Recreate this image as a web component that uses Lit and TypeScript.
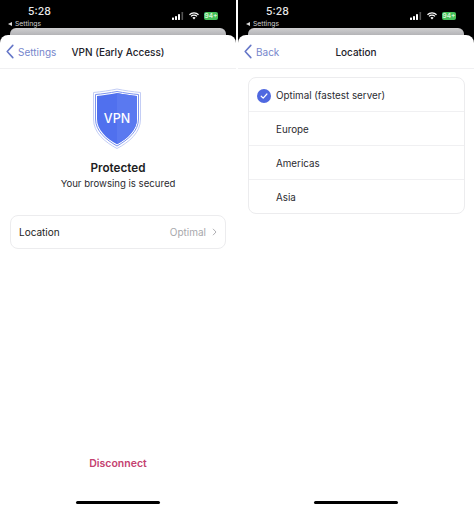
import { LitElement, html, css, svg } from "lit";
import { customElement } from "lit/decorators.js";

const chevron = html`<svg class="back-icon" viewBox="0 0 10 16" width="10" height="15"><path d="M8 1.500 2 8l6 6.500" fill="none" stroke="#6677c8" stroke-width="1.700" stroke-linecap="round" stroke-linejoin="round"/></svg>`;

const status = html`
  <div class="status">
    <div class="status-left">
      <div class="time">5:28</div>
      <div class="crumb"><span class="tri"></span>Settings</div>
    </div>
    <div class="status-right">
      <svg width="12" height="8" viewBox="0 0 12 8">
        <rect x="0" y="5.500" width="2" height="2.500" rx=".4" fill="#fff"/>
        <rect x="3" y="4" width="2" height="4" rx=".4" fill="#fff"/>
        <rect x="6" y="2" width="2" height="6" rx=".4" fill="#fff"/>
        <rect x="9.500" y="0" width="1.600" height="8" rx=".4" fill="#555"/>
      </svg>
      <svg width="10" height="8" viewBox="0 0 13 10">
        <path d="M.6 3.400a8.400 8.400 0 0 1 11.800 0" fill="none" stroke="#fff" stroke-width="1.600"/>
        <path d="M2.600 5.500a5.400 5.400 0 0 1 7.800 0" fill="none" stroke="#fff" stroke-width="1.600"/>
        <path d="M6.500 9.600 4.400 7.400a3 3 0 0 1 4.200 0z" fill="#fff"/>
      </svg>
      <span class="battery">94+</span>
    </div>
  </div>
`;

@customElement("app-root")
export class AppRoot extends LitElement {
  static styles = css`
    :host {
      display: flex;
      width: 474px;
      height: 510px;
      background: #fff;
      justify-content: space-between;
      font-family: Inter, "Liberation Sans", sans-serif;
      color: #1d1d22;
      overflow: hidden;
    }
    .phone {
      width: 236px;
      height: 510px;
      background: #000;
      display: flex;
      flex-direction: column;
    }
    .status {
      height: 28px;
      flex: none;
      display: flex;
      justify-content: space-between;
      padding: 5px 0 0 8px;
      box-sizing: border-box;
    }
    .status-left {
      display: flex;
      flex-direction: column;
      align-items: flex-start;
    }
    .time {
      font-size: 10.500px;
      font-weight: 500;
      line-height: 14px;
      margin-left: 20px;
      color: #e8e8e8;
    }
    .crumb {
      font-size: 6.800px;
      line-height: 9px;
      display: flex;
      align-items: center;
      color: #cfcfcf;
    }
    .tri {
      width: 0;
      height: 0;
      border-top: 2px solid transparent;
      border-bottom: 2px solid transparent;
      border-right: 4px solid #ddd;
      margin-right: 3px;
    }
    .status-right {
      display: flex;
      align-items: center;
      gap: 5px;
      height: 16px;
      margin-top: 3px;
      padding-right: 18px;
    }
    .battery {
      width: 14px;
      height: 8px;
      background: #45c05a;
      color: #d8f5d8;
      font-size: 6.500px;
      font-weight: 600;
      line-height: 8px;
      text-align: center;
      border-radius: 2px;
    }
    .sheet-back {
      height: 7px;
      flex: none;
      margin: 0 10px;
      background: linear-gradient(#cfcfd1, #b4b4b7);
      border-radius: 6px 6px 0 0;
    }
    .sheet {
      flex: 1;
      background: #fff;
      border-radius: 8px 8px 0 0;
      display: flex;
      flex-direction: column;
      min-height: 0;
    }
    .nav {
      height: 33px;
      flex: none;
      border-bottom: 1px solid #f0f0f2;
      display: grid;
      grid-template-columns: 1fr auto 1fr;
      align-items: center;
      padding: 0 5px;
      font-size: 10px;
    }
    .back {
      display: flex;
      align-items: center;
      gap: 3px;
      color: #7686cc;
    }
    .back-icon { flex: none; }
    .title {
      font-weight: 500;
      color: #22222a;
    }
    .main {
      flex: 1;
      display: flex;
      flex-direction: column;
      align-items: center;
      padding: 19px 10px 0;
      min-height: 0;
    }
    .shield { display: block; margin: 0 2px 10px 0; }
    .protected {
      font-size: 11.700px;
      font-weight: 600;
      line-height: 17px;
    }
    .secured {
      font-size: 9.600px;
      line-height: 14px;
      color: #2b2b30;
    }
    .card {
      background: #fff;
      border: 1px solid #ececee;
      border-radius: 8px;
      box-sizing: border-box;
    }
    .loc-card {
      align-self: stretch;
      margin-top: 24px;
      height: 34px;
      display: flex;
      align-items: center;
      justify-content: space-between;
      padding: 0 8px 1px;
      font-size: 10px;
    }
    .value {
      color: #a8a8ac;
      display: flex;
      align-items: center;
      gap: 6px;
    }
    .spacer { flex: 1; }
    .disconnect {
      font-size: 10.500px;
      font-weight: 600;
      color: #c4416f;
      line-height: 14px;
      margin-bottom: 30px;
    }
    .home {
      width: 84px;
      height: 3px;
      border-radius: 2px;
      background: #000;
      margin-bottom: 6px;
      align-self: center;
      flex: none;
    }
    .list { margin: 8px 9px 0 10px; }
    .row {
      height: 34px;
      display: flex;
      align-items: center;
      padding: 2px 0 0 8px;
      gap: 5px;
      font-size: 9.800px;
      color: #2b2b30;
      border-top: 1px solid #f0f0f2;
      box-sizing: border-box;
    }
    .row:first-child { border-top: 0; height: 33px; }
    .check, .check-gap { width: 14px; height: 14px; flex: none; }
    .fill { flex: 1; }
  `;

  private shield() {
    return html`<svg class="shield" width="50" height="62" viewBox="0 0 50 62">
      ${svg`<path d="M25 1 C32 2.500 41 3.800 48.500 4.500 V31 C48.500 45 37 54 25 60.500 C13 54 1.500 45 1.500 31 V4.500 C9 3.800 18 2.500 25 1z" fill="#fff" stroke="#c3cdf5" stroke-width="1"/>
      <path d="M25 3.500 C32 4.800 40 6 46.500 6.500 V31 C46.500 43 36 51.800 25 58 C14 51.800 3.500 43 3.500 31 V6.500 C10 6 18 4.800 25 3.500z" fill="#fff" stroke="#7d94ef" stroke-width="1"/>
      <path d="M25 5 C32 6.300 39.500 7.500 45 8 V31 C45 42 35.500 50.500 25 56.300 C14.500 50.500 5 42 5 31 V8 C10.500 7.500 18 6.300 25 5z" fill="#5070ee"/>
      <path d="M25 5 C32 6.300 39.500 7.500 45 8 V31 C45 42 35.500 50.500 25 56.300z" fill="#5a79f0"/>`}
      <text x="25" y="35" text-anchor="middle" font-size="12.500" font-weight="500" fill="#fff" font-family="Inter, 'Liberation Sans', sans-serif">VPN</text>
    </svg>`;
  }

  render() {
    return html`
      <div class="phone">
        ${status}
        <div class="sheet-back"></div>
        <div class="sheet">
          <div class="nav">
            <div class="back">${chevron}<span>Settings</span></div>
            <div class="title">VPN (Early Access)</div>
            <div></div>
          </div>
          <div class="main">
            ${this.shield()}
            <div class="protected">Protected</div>
            <div class="secured">Your browsing is secured</div>
            <div class="card loc-card">
              <span>Location</span>
              <span class="value">Optimal
                <svg width="5" height="8" viewBox="0 0 5 8"><path d="M1 .8 4 4 1 7.200" fill="none" stroke="#b0b0b4" stroke-width="1"/></svg>
              </span>
            </div>
            <div class="spacer"></div>
            <div class="disconnect">Disconnect</div>
            <div class="home"></div>
          </div>
        </div>
      </div>
      <div class="phone">
        ${status}
        <div class="sheet-back"></div>
        <div class="sheet">
          <div class="nav">
            <div class="back">${chevron}<span>Back</span></div>
            <div class="title">Location</div>
            <div></div>
          </div>
          <div class="card list">
            <div class="row">
              <svg class="check" viewBox="0 0 14 14"><circle cx="7" cy="7" r="7" fill="#4f68e0"/><path d="M4.200 7.200 6.200 9.100 9.900 5" fill="none" stroke="#fff" stroke-width="1.200" stroke-linecap="round" stroke-linejoin="round"/></svg>
              <span>Optimal (fastest server)</span>
            </div>
            <div class="row"><span class="check-gap"></span><span>Europe</span></div>
            <div class="row"><span class="check-gap"></span><span>Americas</span></div>
            <div class="row"><span class="check-gap"></span><span>Asia</span></div>
          </div>
          <div class="fill"></div>
          <div class="home"></div>
        </div>
      </div>
    `;
  }
}
